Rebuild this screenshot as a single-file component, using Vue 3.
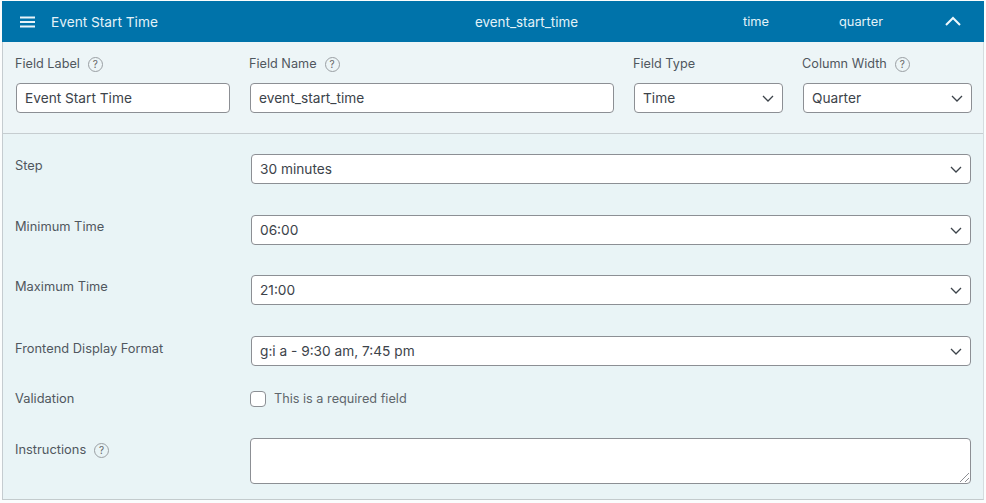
<template>
  <div class="page">
    <div class="panel">
      <header class="bar">
        <svg class="menu" width="16" height="12" viewBox="0 0 16 12"><path d="M0 1.5h15M0 6h15M0 10.5h15" stroke="#e8f4f9" stroke-width="2" fill="none"/></svg>
        <span class="title">Event Start Time</span>
        <span class="slug">event_start_time</span>
        <span class="type">time</span>
        <span class="width">quarter</span>
        <svg class="chev" width="18" height="11" viewBox="0 0 18 11"><path d="M2 9l7-7 7 7" stroke="#eef8fc" stroke-width="2" fill="none"/></svg>
      </header>
      <section class="top">
        <div class="col c1">
          <div class="lab">Field Label <i class="q">?</i></div>
          <div class="ctl"><span>Event Start Time</span></div>
        </div>
        <div class="col c2">
          <div class="lab">Field Name <i class="q">?</i></div>
          <div class="ctl"><span>event_start_time</span></div>
        </div>
        <div class="col c3">
          <div class="lab">Field Type</div>
          <div class="ctl sel"><span>Time</span><svg class="dn" width="12" height="7" viewBox="0 0 12 7"><path d="M1 1l5 5 5-5" stroke="#3c434a" stroke-width="1.3" fill="none"/></svg></div>
        </div>
        <div class="col c4">
          <div class="lab">Column Width <i class="q">?</i></div>
          <div class="ctl sel"><span>Quarter</span><svg class="dn" width="12" height="7" viewBox="0 0 12 7"><path d="M1 1l5 5 5-5" stroke="#3c434a" stroke-width="1.3" fill="none"/></svg></div>
        </div>
      </section>
      <section class="rows">
        <div v-for="r in selects" :key="r.label" class="row" :class="r.cls">
          <div class="rl">{{ r.label }}</div>
          <div class="ctl sel wide"><span>{{ r.value }}</span><svg class="dn" width="12" height="7" viewBox="0 0 12 7"><path d="M1 1l5 5 5-5" stroke="#3c434a" stroke-width="1.3" fill="none"/></svg></div>
        </div>
        <div class="row r-val">
          <div class="rl">Validation</div>
          <div class="check"><span class="box"></span><span class="ct">This is a required field</span></div>
        </div>
        <div class="row r-ins">
          <div class="rl">Instructions <i class="q">?</i></div>
          <div class="area">
            <svg class="grip" width="11" height="11" viewBox="0 0 11 11"><path d="M1 10l9-9M6 10l4-4" stroke="#8c8f94" stroke-width="1" fill="none"/></svg>
          </div>
        </div>
      </section>
    </div>
  </div>
</template>

<script setup>
const selects = [
  { label: 'Step', value: '30 minutes', cls: 'r1' },
  { label: 'Minimum Time', value: '06:00', cls: 'r2' },
  { label: 'Maximum Time', value: '21:00', cls: 'r3' },
  { label: 'Frontend Display Format', value: 'g:i a - 9:30 am, 7:45 pm', cls: 'r4' }
]
</script>

<style>
html, body { margin: 0; background: #fbfdfd; }
</style>

<style scoped>
.page { width: 986px; height: 503px; overflow: hidden; font-family: Inter, "Liberation Sans", sans-serif; padding-top: 1px; box-sizing: border-box; }
.panel { margin: 0 2px; background: #e9f4f6; border-left: 1px solid #c5ccd0; border-right: 1px solid #d5dcdf; border-bottom: 1px solid #c3cbcd; height: 499px; box-sizing: border-box; }
.bar { height: 41px; margin-left: -1px; margin-right: -1px; background: #0073aa; color: #e3f2f8; display: flex; align-items: center; font-size: 13px; position: relative; }
.menu { margin-left: 18px; }
.title { margin-left: 15px; width: 424px; font-size: 13.7px; }
.slug { width: 268px; font-size: 13.4px; }
.type { width: 96px; font-size: 12.8px; }
.width { width: 96px; font-size: 12.8px; }
.chev { margin-left: 9px; }
.top { display: flex; height: 92px; box-sizing: border-box; border-bottom: 1px solid #c6cdd0; background: #edf5f7; padding: 14px 0 0 12px; }
.col { display: flex; flex-direction: column; }
.c1 { width: 234px; margin-left: 1px; }
.c2 { width: 384px; }
.c3 { width: 169px; }
.c4 { width: 169px; }
.c1 .ctl { width: 214px; }
.c2 .ctl { width: 364px; }
.c3 .ctl { width: 149px; }
.c4 .ctl { width: 169px; }
.lab { font-size: 12.7px; color: #50575e; height: 16px; line-height: 16px; margin-left: -1px; margin-bottom: 11px; display: flex; align-items: center; gap: 8px; }
.ctl { height: 30px; box-sizing: border-box; background: #fff; border: 1px solid #8c8f94; border-radius: 4px; display: flex; align-items: center; justify-content: space-between; padding: 0 8px; font-size: 13.7px; color: #3c434a; }
.sel { padding-right: 8px; }
.q { font-style: normal; width: 15px; height: 15px; border: 1px solid #9a9fa3; border-radius: 50%; box-sizing: border-box; font-size: 10px; color: #666; display: inline-flex; align-items: center; justify-content: center; }
.rows { padding-left: 12px; }
.row { display: flex; align-items: flex-start; }
.rl { width: 236px; font-size: 12.85px; color: #50575e; line-height: 16px; display: flex; align-items: center; gap: 8px; }
.wide { width: 720px; padding-left: 8px; }
.r1 { padding-top: 20px; }
.r2 { padding-top: 31px; }
.r3 { padding-top: 30px; }
.r4 { padding-top: 31px; }
.r1 .rl, .r2 .rl, .r3 .rl { padding-top: 4px; }
.r4 .rl { padding-top: 5px; }
.r-val { padding-top: 25px; }
.check { display: flex; align-items: center; gap: 8px; font-size: 12.7px; color: #5f666c; line-height: 16px; margin-left: -1px; }
.box { width: 16px; height: 16px; box-sizing: border-box; background: #fff; border: 1px solid #8c8f94; border-radius: 4px; }
.r-ins { padding-top: 31px; }
.r-ins .rl { padding-top: 4px; }
.area { width: 721px; height: 46px; box-sizing: border-box; background: #fff; border: 1px solid #8c8f94; border-radius: 4px; position: relative; margin-left: -1px; }
.grip { position: absolute; right: 0; bottom: 0; }
</style>
